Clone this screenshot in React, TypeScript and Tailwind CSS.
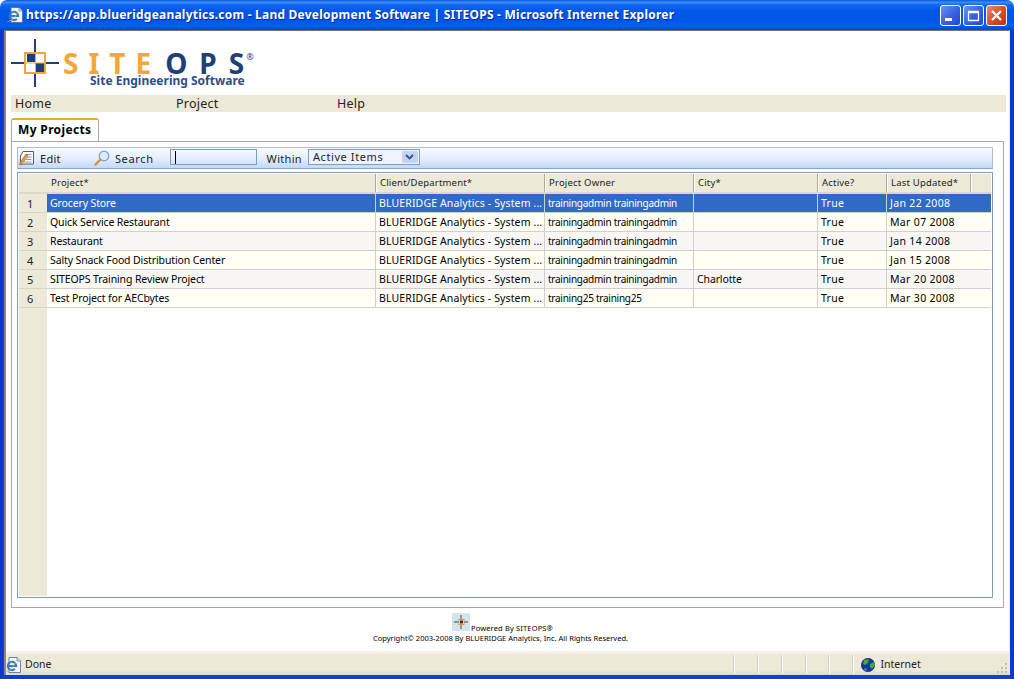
import React from "react";

const columns = [
  { w: "w-[329px]", label: "Project*", tx: "pl-[4px]" },
  { w: "w-[169px]", label: "Client/Department*", tx: "pl-[4px]" },
  { w: "w-[149px]", label: "Project Owner", tx: "pl-[4px]" },
  { w: "w-[124px]", label: "City*", tx: "pl-[4px]" },
  { w: "w-[69px]", label: "Active?", tx: "pl-[4px]" },
  { w: "w-[84px]", label: "Last Updated*", tx: "pl-[4px]" },
];

const client = "BLUERIDGE Analytics - System ...";
const rows = [
  ["Grocery Store", client, "trainingadmin trainingadmin", "", "True", "Jan 22 2008"],
  ["Quick Service Restaurant", client, "trainingadmin trainingadmin", "", "True", "Mar 07 2008"],
  ["Restaurant", client, "trainingadmin trainingadmin", "", "True", "Jan 14 2008"],
  ["Salty Snack Food Distribution Center", client, "trainingadmin trainingadmin", "", "True", "Jan 15 2008"],
  ["SITEOPS Training Review Project", client, "trainingadmin trainingadmin", "Charlotte", "True", "Mar 20 2008"],
  ["Test Project for AECbytes", client, "training25 training25", "", "True", "Mar 30 2008"],
];
const cellW = [
  "w-[329px]",
  "w-[169px] tracking-[0.13px]",
  "w-[149px] text-[10px] tracking-[-0.26px]",
  "w-[124px]",
  "w-[69px] tracking-[0.3px]",
  "w-[104px] tracking-[0.33px]",
];

function IeIcon({ size = 16 }: { size?: number }) {
  return (
    <svg width={size} height={size} viewBox="0 0 16 16">
      <path d="M4 0.5h8l3.5 3.5v11.5H4z" fill="#f2f5fb" stroke="#56658c" strokeWidth="0.8" />
      <path d="M12 0.5v3.5h3.5" fill="#cfd8ea" stroke="#56658c" strokeWidth="0.6" />
      <path d="M2.8 9h8.4a4.2 4.2 0 1 0-1.4 3.1" fill="none" stroke="#2a7ad6" strokeWidth="2" />
      <path d="M0.5 14.5c2.5 0.5 9-5 10.5-10" fill="none" stroke="#e8b030" strokeWidth="0.9" />
    </svg>
  );
}

function Logo() {
  return (
    <svg width="50" height="50" viewBox="0 0 50 50" className="shrink-0">
      <path d="M25 1v48M1 25h48" stroke="#1f3f78" strokeWidth="2" />
      <rect x="15" y="15" width="20" height="20" fill="#fff" stroke="#f7a535" strokeWidth="2" />
      <rect x="17" y="16" width="8" height="8" fill="#1f3f78" />
      <rect x="26" y="25" width="8" height="9" fill="#1f3f78" />
      <rect x="25" y="15" width="1" height="20" fill="#f7a535" />
      <rect x="15" y="24.5" width="20" height="1" fill="#f7a535" />
    </svg>
  );
}

function Globe() {
  return (
    <svg width="14" height="14" viewBox="0 0 14 14">
      <circle cx="7" cy="7" r="6.7" fill="#1a2fb8" stroke="#222" strokeWidth="0.6" />
      <path d="M3 2c2-1 4-1 5 0L7 5 4 7 2 6zM9 6l4-2 1 3-3 4-2-2z" fill="#3cb02c" />
      <path d="M4 10l2 1-1 2-2-2z" fill="#3cb02c" />
    </svg>
  );
}

function EditIcon() {
  return (
    <svg width="16" height="16" viewBox="0 0 16 16">
      <path d="M4 1.5h10.5v12.5H1.5V6z" fill="#fff" stroke="#505a70" strokeWidth="1" />
      <path d="M7 4.5h5.5M8 7h4.5M7 9.5h5.5M5 12h7.5" stroke="#7080a0" strokeWidth="0.8" />
      <path d="M1 12.5l6-8.5 2 1.5-6 8.5-2.5 1z" fill="#e8a030" stroke="#804010" strokeWidth="0.5" />
    </svg>
  );
}

function SearchIcon() {
  return (
    <svg width="16" height="16" viewBox="0 0 16 16">
      <circle cx="10" cy="6" r="4.8" fill="#d8ecfb" stroke="#7a9cc0" strokeWidth="1.2" />
      <path d="M6.5 9.5L1.5 14.5" stroke="#d88a30" strokeWidth="2.2" strokeLinecap="round" />
    </svg>
  );
}

function CaptionButton({ kind }: { kind: "min" | "max" | "close" }) {
  const bg =
    kind === "close"
      ? "bg-[linear-gradient(135deg,#ee8a68,#d9512c_50%,#b83412)]"
      : "bg-[linear-gradient(135deg,#6f93f5,#3a62e4_50%,#2348d0)]";
  return (
    <div className={`w-[21px] h-[21px] rounded-[3px] border border-white flex items-center justify-center ${bg}`}>
      <svg width="13" height="13" viewBox="0 0 13 13">
        {kind === "min" && <rect x="1" y="9" width="7" height="3" fill="#fff" />}
        {kind === "max" && <path d="M1.5 3.5h10v8h-10zM1 2.5h11" fill="none" stroke="#fff" strokeWidth="1.3" />}
        {kind === "close" && <path d="M2 2l9 9M11 2l-9 9" stroke="#fff" strokeWidth="2.2" />}
      </svg>
    </div>
  );
}

export default function App() {
  return (
    <div className="w-[1014px] h-[679px] flex flex-col bg-white overflow-hidden [font-family:'Liberation_Sans',Arial,sans-serif]">
      {/* title bar */}
      <div className="h-[30px] shrink-0 rounded-t-[7px] flex items-center pl-[7px] pr-[7px] bg-[linear-gradient(180deg,#0a5ae0_0%,#3a8cf6_8%,#1368f0_16%,#0058ea_35%,#0056e6_70%,#0060f4_85%,#0048d0_100%)]">
        <IeIcon />
        <span className="ml-[3px] text-white font-bold text-[12px] tracking-[0.225px] whitespace-nowrap [text-shadow:1px_1px_0_#0a2a90]">
          https://app.blueridgeanalytics.com - Land Development Software | SITEOPS - Microsoft Internet Explorer
        </span>
        <div className="ml-auto flex gap-[2px]">
          <CaptionButton kind="min" />
          <CaptionButton kind="max" />
          <CaptionButton kind="close" />
        </div>
      </div>

      {/* client frame */}
      <div className="flex-1 min-h-0 flex bg-[#0a3fdc] border-l-[3px] border-r-[3px] border-l-[#0a38d0] border-r-[#0a38d0] border-b-[4px] border-b-[#0a40dc]">
        <div className="flex-1 min-w-0 flex flex-col ml-[1px] mr-[1px] bg-white border-l-2 border-l-[#8a877c] border-t border-t-[#77756a] border-r border-r-[#ece9d8]">
          <div className="flex-1 min-h-0 flex flex-col pl-[5px] pt-[1px]">
            {/* logo */}
            <div className="h-[63px] shrink-0 flex pt-[6px] -ml-[1px]">
              <Logo />
              <div className="ml-[3px] flex flex-col">
                <div className="flex items-start h-[36px] pt-[14px] font-bold text-[28px] leading-[22px] tracking-[10px] whitespace-nowrap">
                  <span className="text-[#f7a535]">SITE</span>
                  <span className="ml-[4px] text-[#1f3f78] tracking-[12px]">OP</span>
                  <span className="text-[#1f3f78] tracking-normal">S</span>
                  <span className="text-[#1f3f78] text-[9px] font-normal leading-[10px] tracking-normal ml-[2px]">®</span>
                </div>
                <span className="ml-[27px] [font-family:'Open_Sans',sans-serif] font-bold text-[12px] leading-[14px] text-[#2f4f8a] whitespace-nowrap">
                  Site Engineering Software
                </span>
              </div>
            </div>

            {/* menu */}
            <div className="w-[995px] h-[17px] shrink-0 bg-[#ece9d8] flex items-center pt-[1px] text-[12.5px] text-[#222] tracking-[0.25px]">
              <div className="w-[161px] pl-[4px]">Home</div>
              <div className="w-[161px] pl-[4px]">Project</div>
              <div className="w-[161px] pl-[4px]">Help</div>
            </div>

            {/* tab */}
            <div className="mt-[6px] h-[23px] w-[88px] shrink-0 rounded-t-[3px] border-t-2 border-t-[#f5a623] border-l border-r border-[#aaa] bg-white flex items-center pl-[6px] pb-[2px] font-bold text-[12px] tracking-[0.35px] text-black">
              My Projects
            </div>

            {/* panel */}
            <div className="w-[993px] h-[467px] shrink-0 border border-[#a8a8a8] pt-[5px] pl-[5px]">
              {/* toolbar */}
              <div className="w-[976px] h-[22px] border border-[#b4bcc8] border-b-[#8aa4c8] bg-[linear-gradient(180deg,#f6f9ff,#e6effd_50%,#c4d8f8)] flex items-center text-[11px] text-[#222] tracking-[0.3px]">
                <div className="ml-[1px]"><EditIcon /></div>
                <span className="ml-[5px] mt-[3px]">Edit</span>
                <div className="ml-[33px]"><SearchIcon /></div>
                <span className="ml-[5px] mt-[3px] tracking-[0.65px]">Search</span>
                <div className="ml-[16px] mb-[2px] w-[87px] h-[16px] border border-[#7f9db9] flex items-center pl-[4px]">
                  <div className="w-px h-[13px] bg-black" />
                </div>
                <span className="ml-[10px] mt-[3px]">Within</span>
                <div className="ml-[6px] mb-[2px] w-[112px] h-[16px] border border-[#7f9db9] bg-[#eef3fd] flex items-center pl-[4px] pr-[1px] justify-between tracking-[0.6px]">
                  <span>Active Items</span>
                  <div className="w-[16px] h-[12px] rounded-[2px] bg-[#c3d2f4] flex items-center justify-center">
                    <svg width="9" height="6" viewBox="0 0 9 6">
                      <path d="M1 1l3.5 3.5L8 1" fill="none" stroke="#39507e" strokeWidth="1.8" />
                    </svg>
                  </div>
                </div>
              </div>

              {/* grid */}
              <div className="mt-[3px] w-[976px] h-[426px] border border-[#7f9db9] p-px flex flex-col text-[10.5px] leading-[14px] tracking-[-0.12px]">
                {/* header */}
                <div className="h-[20px] shrink-0 flex bg-[#ece9d8] border-b-2 border-b-[#dcd8c6] text-[9.5px] tracking-[0.2px] text-[#222]">
                  <div className="w-[28px] shrink-0" />
                  {columns.map((c) => (
                    <div key={c.label} className={`${c.w} shrink-0 flex items-center pb-[1px] ${c.tx} border-r border-r-[#aca899] shadow-[1px_0_0_#fff]`}>
                      {c.label}
                    </div>
                  ))}
                </div>
                {/* body */}
                <div className="flex-1 min-h-0 flex">
                  <div className="w-[28px] shrink-0 bg-[#ece9d8] text-[11px] text-[#222]">
                    {rows.map((_, i) => (
                      <div key={i} className="h-[19px] pt-[3px] pl-[8px] border-b border-b-[#d8d5c5]">
                        {i + 1}
                      </div>
                    ))}
                  </div>
                  <div className="flex-1 min-w-0">
                    {rows.map((r, i) => {
                      const bg = i === 0 ? "bg-[#316ac5] text-white" : i % 2 === 1 ? "bg-[#fffff5] text-black" : "bg-[#f8f7f4] text-black";
                      return (
                        <div key={i} className={`h-[19px] flex border-b border-b-[#d0d0d0] ${bg}`}>
                          {r.map((t, j) => (
                            <div
                              key={j}
                              className={`${cellW[j]} shrink-0 whitespace-nowrap overflow-hidden pl-[3px] pt-[2px] ${j < 5 ? "border-r border-r-[#cfcfcf]" : ""}`}
                            >
                              {t}
                            </div>
                          ))}
                        </div>
                      );
                    })}
                  </div>
                </div>
              </div>
            </div>

            {/* footer */}
            <div className="mt-[5px] flex flex-col items-center w-[979px] text-black">
              <div className="ml-[4px] flex items-end h-[18px] text-[7.5px] leading-[8px]">
                <div className="w-[18px] h-[18px] bg-[#d5e3ea] shrink-0 flex items-center justify-center">
                  <svg width="16" height="16" viewBox="0 0 16 16">
                    <path d="M8 1v14M1 8h14" stroke="#6a7ba0" strokeWidth="1.4" />
                    <rect x="6" y="5.5" width="5" height="5" fill="#fff" stroke="#ee8a40" strokeWidth="1" />
                    <rect x="7" y="6.5" width="3" height="3" fill="#502010" />
                  </svg>
                </div>
                <span className="ml-[1px] mb-[-1px] tracking-[0.15px]">Powered By SITEOPS®</span>
              </div>
              <div className="mt-[3px] text-[7.5px] leading-[8px] tracking-[0.02px] whitespace-nowrap">
                Copyright© 2003-2008 By BLUERIDGE Analytics, Inc. All Rights Reserved.
              </div>
            </div>
          </div>

          {/* status bar */}
          <div className="h-[24px] shrink-0 flex items-center bg-[linear-gradient(180deg,#f6f4ea_0,#f6f4ea_2px,#ece9d8_3px,#ece9d8_80%,#dedbc8)] text-[10.5px] text-[#222] pt-[3px]">
            <div className="ml-[-1px] flex items-center w-[730px]">
              <IeIcon />
              <span className="ml-[4px]">Done</span>
            </div>
            {[0, 1, 2, 3, 4].map((i) => (
              <div key={i} className="w-[24px] h-[19px] border-l border-l-[#d3d0bf] shadow-[inset_1px_0_0_#fff]" />
            ))}
            <div className="h-[19px] flex items-center pl-[8px] border-l border-l-[#d3d0bf] shadow-[inset_1px_0_0_#fff] w-[145px]">
              <Globe />
              <span className="ml-[5px]">Internet</span>
            </div>
            <div className="ml-auto self-end mb-[1px] mr-[1px]">
              <svg width="11" height="11" viewBox="0 0 11 11">
                <path d="M8 0h2v2H8zM4 4h2v2H4zM8 4h2v2H8zM0 8h2v2H0zM4 8h2v2H4zM8 8h2v2H8z" fill="#c4c1ae" />
              </svg>
            </div>
          </div>
        </div>
      </div>
    </div>
  );
}
